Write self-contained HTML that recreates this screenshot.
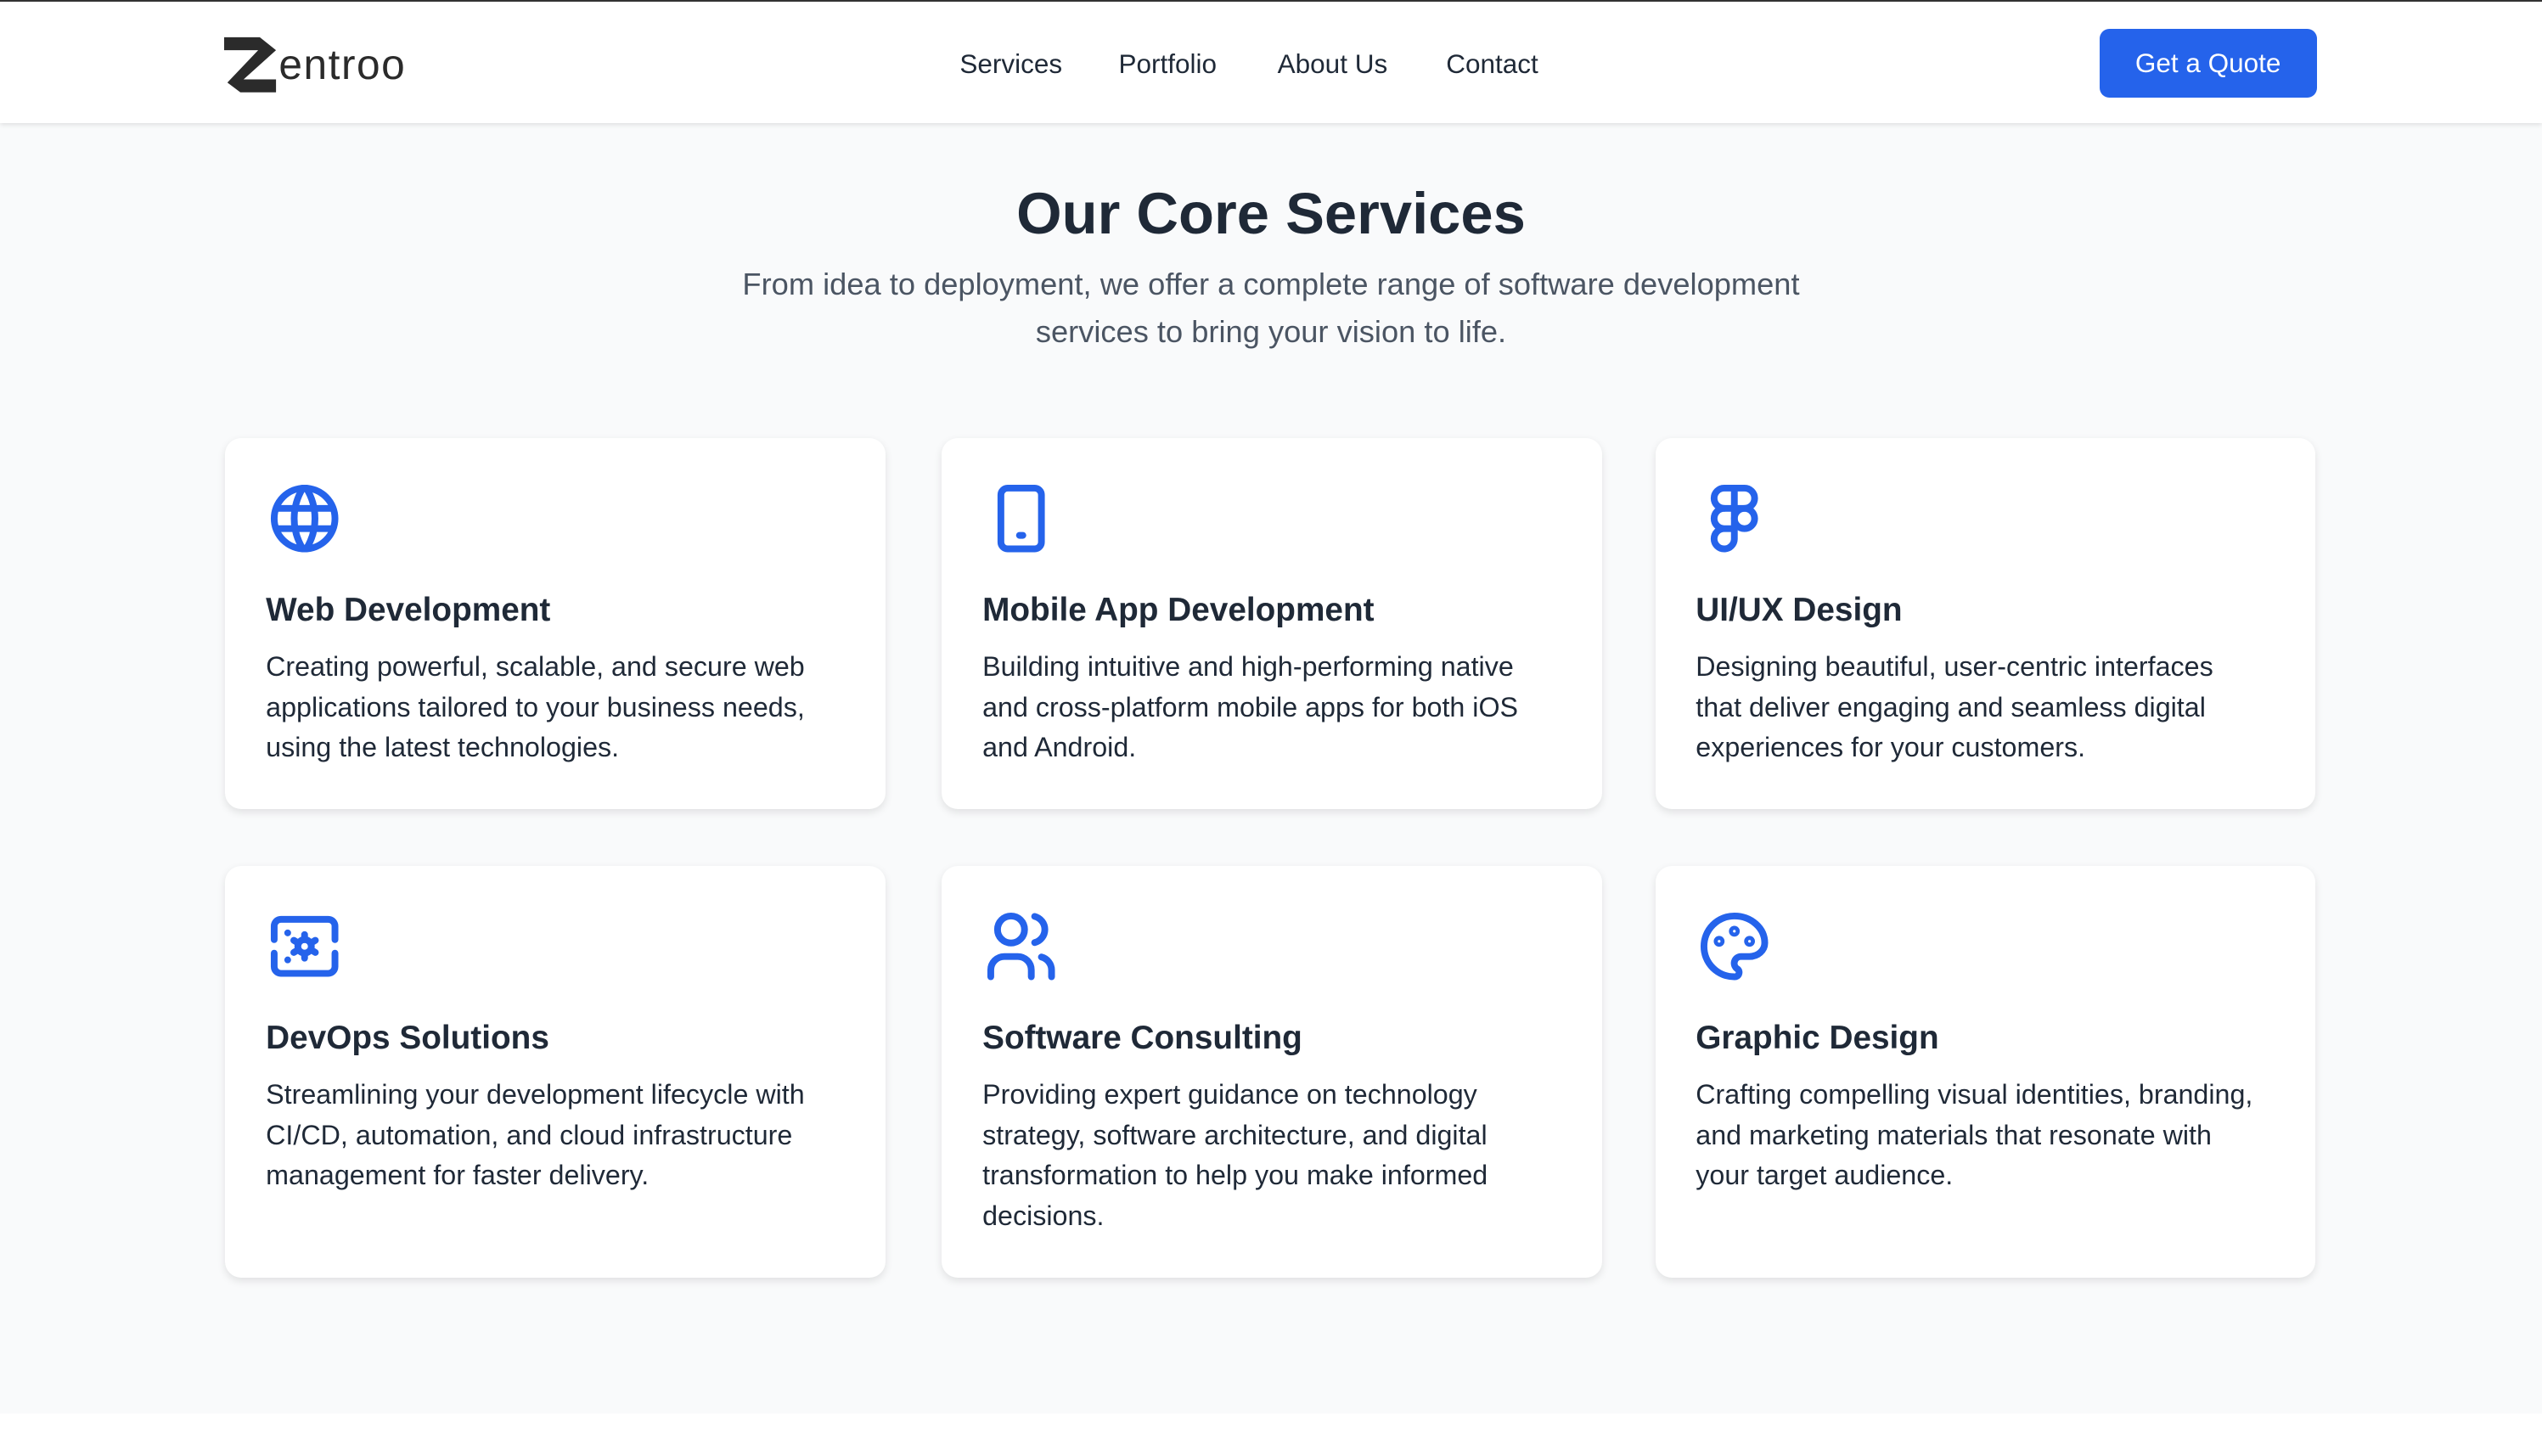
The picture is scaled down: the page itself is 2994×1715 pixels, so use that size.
<!DOCTYPE html>
<html><head><meta charset="utf-8"><style>
html,body{margin:0;padding:0;}
body{width:1568px;height:898px;zoom:1.909439;overflow:hidden;background:#fff;font-family:"Liberation Sans",sans-serif;position:relative;}
.top{height:1px;background:#333;}
nav{height:75px;background:#fff;box-shadow:0 1px 3px rgba(0,0,0,.12);position:relative;z-index:2;}
.logo{position:absolute;left:138px;top:20px;display:flex;align-items:flex-end;}
.logo span{font-size:26px;color:#2b2b2b;letter-spacing:.8px;margin-left:-2px;line-height:1;position:relative;top:-4px;}
.links a{position:absolute;top:29px;font-size:16.5px;color:#1f2937;}
.btn{position:absolute;left:1295px;top:17px;width:134px;height:42px;background:#2563eb;color:#fff;border-radius:6px;font-size:16.5px;display:flex;align-items:center;justify-content:center;}
main{background:#f9fafb;height:796px;}
h1{margin:0;position:absolute;top:111px;width:100%;text-align:center;font-size:36px;color:#1f2937;font-weight:bold;}
.sub{position:absolute;top:161px;width:100%;text-align:center;font-size:19px;line-height:29px;color:#4b5563;}
.card{position:absolute;width:407px;background:#fff;border-radius:10px;box-shadow:0 2px 5px rgba(0,0,0,.1);box-sizing:border-box;padding:25px 33px 25px 25px;}
.card svg{width:50px;height:50px;display:block;margin-left:-1px;}
.card h3{margin:20px 0 11px;font-size:20.3px;font-weight:bold;color:#1f2937;white-space:nowrap;}
.card p{margin:0;font-size:16.9px;line-height:25px;color:#1f2937;}
</style></head><body>
<div class="top"></div>
<nav>
<div class="logo"><svg width="36" height="36" viewBox="0 0 36 36"><path d="M0 2h22l10 8L12 28h20v8H10L2 30 21 10H0z" fill="#2b2b2b"/></svg><span>entroo</span></div>
<div class="links"><a style="left:592px">Services</a><a style="left:690px">Portfolio</a><a style="left:788px">About Us</a><a style="left:892px">Contact</a></div>
<div class="btn">Get a Quote</div>
</nav>
<main></main>
<h1>Our Core Services</h1>
<div class="sub">From idea to deployment, we offer a complete range of software development<br>services to bring your vision to life.</div>

<div class="card" style="left:139px;top:270px;height:229px">
<svg viewBox="0 0 24 24" fill="none" stroke="#2563eb" stroke-width="2" stroke-linecap="round" stroke-linejoin="round"><circle cx="12" cy="12" r="9"/><path d="M3.6 9h16.8M3.6 15h16.8M11.5 3a17 17 0 0 0 0 18M12.5 3a17 17 0 0 1 0 18"/></svg>
<h3>Web Development</h3><p>Creating powerful, scalable, and secure web applications tailored to your business needs, using the latest technologies.</p></div>

<div class="card" style="left:581px;top:270px;height:229px">
<svg viewBox="0 0 24 24" fill="none" stroke="#2563eb" stroke-width="2" stroke-linecap="round" stroke-linejoin="round"><rect x="6" y="3" width="12" height="18" rx="2"/><path d="M11.5 17h1"/></svg>
<h3>Mobile App Development</h3><p>Building intuitive and high-performing native and cross-platform mobile apps for both iOS and Android.</p></div>

<div class="card" style="left:1021px;top:270px;height:229px">
<svg viewBox="0 0 24 24" fill="none" stroke="#2563eb" stroke-width="2" stroke-linecap="round" stroke-linejoin="round"><circle cx="15" cy="12" r="3"/><path d="M6 3m0 3a3 3 0 0 1 3-3h6a3 3 0 0 1 3 3v0a3 3 0 0 1-3 3h-6a3 3 0 0 1-3-3z"/><path d="M9 9a3 3 0 0 0 0 6h3m-3 0a3 3 0 1 0 3 3v-15"/></svg>
<h3>UI/UX Design</h3><p>Designing beautiful, user-centric interfaces that deliver engaging and seamless digital experiences for your customers.</p></div>

<div class="card" style="left:139px;top:534px;height:254px">
<svg viewBox="0 0 24 24" fill="none" stroke="#2563eb" stroke-width="2" stroke-linecap="round" stroke-linejoin="round"><path d="M3 10V6a2 2 0 0 1 2-2h14a2 2 0 0 1 2 2v4M3 14v4a2 2 0 0 0 2 2h14a2 2 0 0 0 2-2v-4"/><path d="M7 8v.01M7 16v.01"/><circle cx="12" cy="12" r="2"/><path d="M12 8.5v1.5M12 14v1.5M8.8 10.2l1.3.8M13.9 13l1.3.8M8.8 13.8l1.3-.8M13.9 11l1.3-.8"/></svg>
<h3>DevOps Solutions</h3><p>Streamlining your development lifecycle with CI/CD, automation, and cloud infrastructure management for faster delivery.</p></div>

<div class="card" style="left:581px;top:534px;height:254px">
<svg viewBox="0 0 24 24" fill="none" stroke="#2563eb" stroke-width="2" stroke-linecap="round" stroke-linejoin="round"><circle cx="9" cy="7" r="4"/><path d="M3 21v-2a4 4 0 0 1 4-4h4a4 4 0 0 1 4 4v2M16 3.13a4 4 0 0 1 0 7.750M21 21v-2a4 4 0 0 0-3-3.85"/></svg>
<h3>Software Consulting</h3><p>Providing expert guidance on technology strategy, software architecture, and digital transformation to help you make informed decisions.</p></div>

<div class="card" style="left:1021px;top:534px;height:254px">
<svg viewBox="0 0 24 24" fill="none" stroke="#2563eb" stroke-width="2" stroke-linecap="round" stroke-linejoin="round"><path d="M12 21a9 9 0 0 1 0-18c4.970 0 9 3.582 9 8 0 1.06-.474 2.078-1.318 2.828-.844.75-1.989 1.172-3.182 1.172h-2.5a2 2 0 0 0-1 3.75A1.3 1.3 0 0 1 12 21"/><circle cx="7.5" cy="10.5" r=".6"/><circle cx="12" cy="7.5" r=".6"/><circle cx="16.5" cy="10.5" r=".6"/></svg>
<h3>Graphic Design</h3><p>Crafting compelling visual identities, branding, and marketing materials that resonate with your target audience.</p></div>
</body></html>
